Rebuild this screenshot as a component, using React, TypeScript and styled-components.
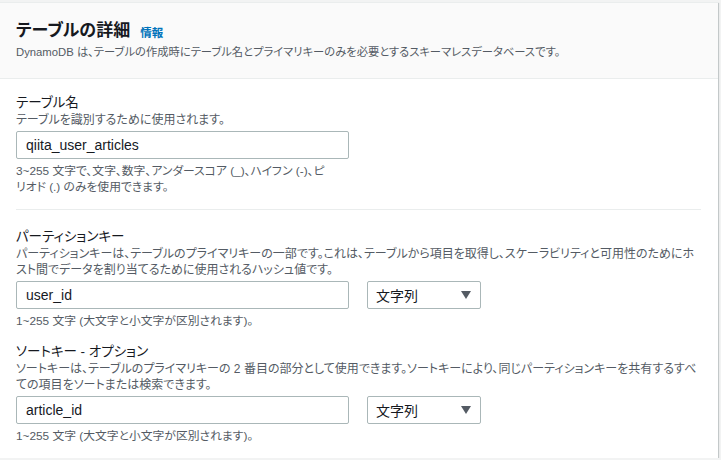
import React from 'react';
import styled, { createGlobalStyle } from 'styled-components';

const GlobalStyle = createGlobalStyle`
    html, body {
        margin: 0;
        padding: 0;
        background: #f2f3f3;
    }
    body {
        font-family: "Liberation Sans", "Noto Sans CJK JP", sans-serif;
        color: #16191f;
        font-feature-settings: "palt";
    }
`;

const Card = styled.div`
    margin: 2px 3px 0 -1px;
    background: #ffffff;
    border-top: 1px solid #eaeded;
    box-shadow: 0 1px 1px 0 rgba(0, 28, 36, 0.3), 1px 1px 1px 0 rgba(0, 28, 36, 0.15);
`;

const Header = styled.div`
    background: #fafafa;
    border-bottom: 1px solid #eaeded;
    padding: 14px 17px 18px 17px;
`;

const TitleRow = styled.div`
    display: flex;
    align-items: center;
    gap: 10px;
    height: 27px;
`;

const Title = styled.h2`
    margin: 0;
    font-size: 17px;
    line-height: 24px;
    font-weight: 700;
`;

const InfoLink = styled.a`
    font-size: 11.5px;
    font-weight: 700;
    color: #0073bb;
    text-decoration: none;
    padding-top: 2px;
`;

const HeaderDesc = styled.div`
    font-size: 11.3px;
    line-height: 16px;
    color: #545b64;
`;

const Body = styled.div`
    padding: 15px 17px 14px 17px;
`;

const Field = styled.div<{ $gap?: number }>`
    margin-top: ${(p) => p.$gap ?? 0}px;
`;

const Label = styled.div`
    font-size: 13.5px;
    line-height: 18px;
`;

const Desc = styled.div`
    font-size: 12px;
    line-height: 16px;
    color: #545b64;
`;

const Controls = styled.div`
    display: flex;
    gap: 18px;
    margin-top: 3px;
`;

const TextInput = styled.div`
    box-sizing: border-box;
    width: 333px;
    height: 28px;
    border: 1px solid #aab7b8;
    border-radius: 2px;
    padding: 0 9px;
    display: flex;
    align-items: center;
    font-size: 14px;
    background: #fff;
`;

const Select = styled.div`
    box-sizing: border-box;
    width: 114px;
    height: 28px;
    border: 1px solid #aab7b8;
    border-radius: 2px;
    padding: 0 9px 0 8px;
    display: flex;
    align-items: center;
    justify-content: space-between;
    font-size: 14px;
    background: #fff;
`;

const Arrow = styled.svg`
    width: 10px;
    height: 8px;
    fill: #545b64;
`;

const Hint = styled.div<{ $width?: number }>`
    margin-top: 4px;
    font-size: 11.8px;
    line-height: 16px;
    color: #545b64;
    max-width: ${(p) => (p.$width ? `${p.$width}px` : 'none')};
`;

const Divider = styled.hr`
    border: none;
    border-top: 1px solid #eaeded;
    margin: 14px 0 18px 0;
`;

const KeySelect: React.FC = () => (
    <Select>
        <span>文字列</span>
        <Arrow viewBox="0 0 10 8">
            <path d="M0 0 L10 0 L5 8 Z" />
        </Arrow>
    </Select>
);

const App: React.FC = () => {
    return (
        <>
            <GlobalStyle />
            <Card>
                <Header>
                    <TitleRow>
                        <Title>テーブルの詳細</Title>
                        <InfoLink href="#">情報</InfoLink>
                    </TitleRow>
                    <HeaderDesc>
                        DynamoDB は、テーブルの作成時にテーブル名とプライマリキーのみを必要とするスキーマレスデータベースです。
                    </HeaderDesc>
                </Header>
                <Body>
                    <Field>
                        <Label>テーブル名</Label>
                        <Desc>テーブルを識別するために使用されます。</Desc>
                        <Controls>
                            <TextInput>qiita_user_articles</TextInput>
                        </Controls>
                        <Hint $width={315}>
                            3~255 文字で、文字、数字、アンダースコア (_)、ハイフン (-)、ピリオド (.) のみを使用できます。
                        </Hint>
                    </Field>
                    <Divider />
                    <Field>
                        <Label>パーティションキー</Label>
                        <Desc>
                            パーティションキーは、テーブルのプライマリキーの一部です。これは、テーブルから項目を取得し、スケーラビリティと可用性のためにホスト間でデータを割り当てるために使用されるハッシュ値です。
                        </Desc>
                        <Controls>
                            <TextInput>user_id</TextInput>
                            <KeySelect />
                        </Controls>
                        <Hint>1~255 文字 (大文字と小文字が区別されます)。</Hint>
                    </Field>
                    <Field $gap={14}>
                        <Label>ソートキー - オプション</Label>
                        <Desc>
                            ソートキーは、テーブルのプライマリキーの 2 番目の部分として使用できます。ソートキーにより、同じパーティションキーを共有するすべての項目をソートまたは検索できます。
                        </Desc>
                        <Controls>
                            <TextInput>article_id</TextInput>
                            <KeySelect />
                        </Controls>
                        <Hint>1~255 文字 (大文字と小文字が区別されます)。</Hint>
                    </Field>
                </Body>
            </Card>
        </>
    );
};

export default App;
